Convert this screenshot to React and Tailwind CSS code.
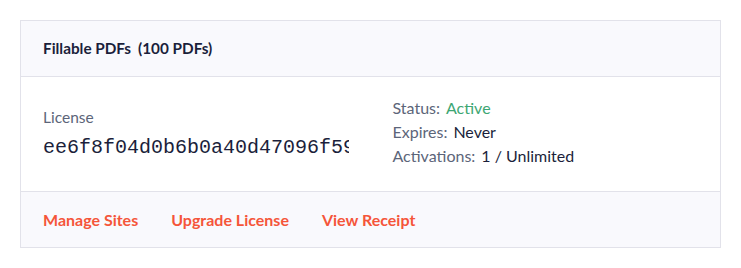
import React from "react";

export default function App() {
  return (
    <div className="w-[741px] h-[268px] bg-white p-5" style={{ fontFamily: "Lato, 'Open Sans', sans-serif" }}>
      <div className="border border-[#e2e2ea] bg-white">
        <div className="h-[56px] flex items-center px-[22px] bg-[#f9f9fd] border-b border-[#e2e2ea] text-[15.3px] font-bold text-[#1b1f3b]">
          <span>Fillable PDFs</span>
          <span className="ml-[7px]">(100 PDFs)</span>
        </div>
        <div className="grid grid-cols-2 gap-[44px] items-center px-[22px] pt-[19px] pb-[23px] border-b border-[#e2e2ea]">
          <div className="overflow-hidden min-w-0">
            <div className="text-[15.5px] leading-6 text-[#5c6579]">License</div>
            <div
              className="mt-[7px] text-[20px] leading-6 text-[#1b1f3b] whitespace-nowrap overflow-hidden"
              style={{ fontFamily: "'Liberation Mono', monospace" }}
            >
              ee6f8f04d0b6b0a40d47096f59c1a2b3
            </div>
          </div>
          <div className="text-[16px] leading-6 text-[#5c6579]">
            <div>
              Status:<span className="ml-[6px] text-[#3da673]">Active</span>
            </div>
            <div>
              Expires:<span className="ml-[6px] text-[#1b1f3b]">Never</span>
            </div>
            <div>
              Activations:<span className="ml-[6px] text-[#1b1f3b]">1 / Unlimited</span>
            </div>
          </div>
        </div>
        <div className="h-[55px] flex items-center gap-[33px] px-[22px] bg-[#f9f9fd] text-[16px] font-bold text-[#f5553a]">
          <a>Manage Sites</a>
          <a>Upgrade License</a>
          <a>View Receipt</a>
        </div>
      </div>
    </div>
  );
}
